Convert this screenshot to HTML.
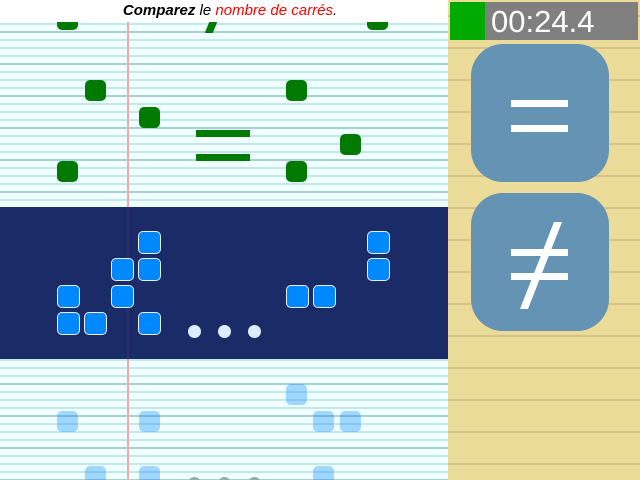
<!DOCTYPE html>
<html style="overflow:hidden"><head><meta charset="utf-8"><style>
*{margin:0;padding:0}
html,body{width:640px;height:480px;overflow:hidden}
body{position:relative;font-family:"Liberation Sans",sans-serif;background:#fff}
#wrap{position:absolute;left:0;top:0;width:640px;height:480px;overflow:hidden}
#left{position:absolute;left:0;top:0;width:448px;height:480px;background-color:#effeff;
background-image:repeating-linear-gradient(to bottom,transparent 0,transparent 30px,rgba(150,190,190,.55) 30px,rgba(150,190,190,.55) 32px),repeating-linear-gradient(to bottom,transparent 0,transparent 6px,rgba(170,215,220,.6) 6px,rgba(170,215,220,.6) 8px);background-position:0 1px}
#margin{position:absolute;left:127px;top:0;width:2px;height:480px;background:#f2a8a8}
#hdr{position:absolute;left:0;top:0;width:448px;height:22px;background:#fff;text-align:center;font-style:italic;font-size:15px;line-height:22px;padding-left:12px;box-sizing:border-box}
.g{position:absolute;width:21px;height:21px;border-radius:5px;background:#007a00}
.b{position:absolute;width:21px;height:21px;border-radius:5px;background:#0088ff;border:1px solid #e8f0ff}
.l{position:absolute;width:21px;height:21px;border-radius:5px;background:rgba(0,136,255,.33)}
.d{position:absolute;width:13px;height:13px;border-radius:50%;background:#dbeeff}
#band{position:absolute;left:0;top:207px;width:448px;height:152px;background:#1b2b68}
#right{position:absolute;left:448px;top:0;width:192px;height:480px;background-color:#ecdc9a;
background-image:repeating-linear-gradient(to bottom,transparent 0,transparent 15px,#d6c28a 15px,#d6c28a 17px,transparent 17px,transparent 32px)}
.btn{position:absolute;left:471px;width:138px;height:138px;border-radius:32px;background:#6593b3}
.bar{position:absolute;background:#fff;height:7px;width:57px;left:40px}
</style></head><body><div id="wrap">
<div id="left"></div>
<div id="margin"></div>
<div class="g" style="left:57px;top:9px;"></div>
<div class="g" style="left:367px;top:9px;"></div>
<div id="hdr"><b>Comparez</b> le <span style="color:#f00">nombre de carrés</span>.</div>
<div style="position:absolute;left:207px;top:22px;width:8px;height:11px;background:#007a00;transform:skewX(-22deg)"></div>
<div class="g" style="left:85px;top:80px"></div>
<div class="g" style="left:139px;top:107px"></div>
<div class="g" style="left:57px;top:161px"></div>
<div class="g" style="left:286px;top:80px"></div>
<div class="g" style="left:340px;top:134px"></div>
<div class="g" style="left:286px;top:161px"></div>
<div style="position:absolute;left:196px;top:130px;width:54px;height:7px;background:#007a00"></div>
<div style="position:absolute;left:196px;top:154px;width:54px;height:7px;background:#007a00"></div>
<div id="band"></div>
<div style="position:absolute;left:127px;top:207px;width:2px;height:152px;background:rgba(100,60,120,.25)"></div>
<div class="b" style="left:138px;top:231px"></div>
<div class="b" style="left:111px;top:258px"></div>
<div class="b" style="left:138px;top:258px"></div>
<div class="b" style="left:57px;top:285px"></div>
<div class="b" style="left:111px;top:285px"></div>
<div class="b" style="left:57px;top:312px"></div>
<div class="b" style="left:84px;top:312px"></div>
<div class="b" style="left:138px;top:312px"></div>
<div class="b" style="left:367px;top:231px"></div>
<div class="b" style="left:367px;top:258px"></div>
<div class="b" style="left:286px;top:285px"></div>
<div class="b" style="left:313px;top:285px"></div>
<div class="d" style="left:188px;top:325px"></div>
<div class="d" style="left:218px;top:325px"></div>
<div class="d" style="left:248px;top:325px"></div>
<div class="l" style="left:286px;top:384px"></div>
<div class="l" style="left:57px;top:411px"></div>
<div class="l" style="left:139px;top:411px"></div>
<div class="l" style="left:313px;top:411px"></div>
<div class="l" style="left:340px;top:411px"></div>
<div class="l" style="left:85px;top:466px"></div>
<div class="l" style="left:139px;top:466px"></div>
<div class="l" style="left:313px;top:466px"></div>
<div class="d" style="left:188px;top:477px;background:#9aa"></div>
<div class="d" style="left:218px;top:477px;background:#9aa"></div>
<div class="d" style="left:248px;top:477px;background:#9aa"></div>
<div id="right"></div>
<div style="position:absolute;left:450px;top:2px;width:35px;height:38px;background:#00aa00"></div>
<div style="position:absolute;left:485px;top:2px;width:153px;height:38px;background:#808080;color:#fff;font-size:31px;line-height:40px;padding-left:6px;box-sizing:border-box">00:24.4</div>
<div class="btn" style="top:44px"><div class="bar" style="top:56px"></div><div class="bar" style="top:81px"></div></div>
<div class="btn" style="top:193px"><div class="bar" style="top:56px"></div><div class="bar" style="top:80px"></div>
<svg style="position:absolute;left:0;top:0" width="138" height="138"><polygon points="83,29 91,29 57,116 49,116" fill="#fff"/></svg></div>
</div></body></html>
